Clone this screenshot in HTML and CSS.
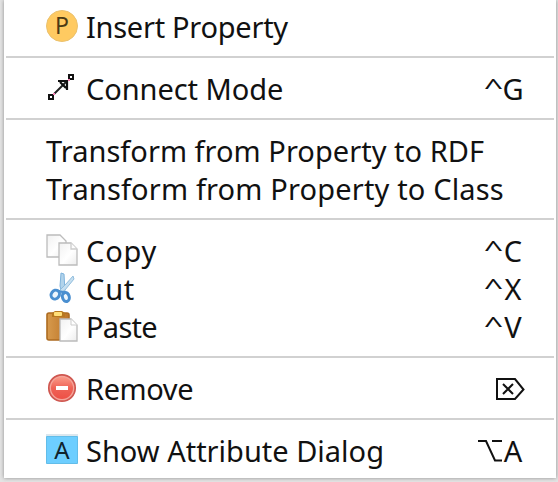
FILE: index.html
```html
<!DOCTYPE html>
<html lang="en">
<head>
<meta charset="utf-8">
<title>Context Menu</title>
<link rel="stylesheet" href="styles.css">
</head>
<body>
<div class="menu">
  <div class="item">
    <svg class="icon" viewBox="0 0 32 32"><circle cx="16" cy="16" r="15.5" fill="#ffca61" stroke="#eac16e"/><text x="16" y="24" text-anchor="middle" class="p-letter">P</text></svg>
    <span class="label insert">Insert Property</span>
  </div>
  <hr>
  <div class="item">
    <svg class="icon" viewBox="0 0 32 32"><g fill="none" stroke="#111" stroke-width="2"><path d="M8 22L21 9" stroke="#222"/><path d="M12 9h9v9M14 10l6 6" stroke-width="2.2"/><rect x="3" y="23" width="4" height="4"/><rect x="23" y="3" width="4" height="4"/></g><path d="M7 21h2v2H7zM22 7h2v2h-2z" fill="#f580b4"/></svg>
    <span class="label connect">Connect Mode</span>
    <span class="keys"><span class="caret">^</span><span class="key">G</span></span>
  </div>
  <hr>
  <div class="item"><span class="label rdf">Transform from Property to RDF</span></div>
  <div class="item"><span class="label class">Transform from Property to Class</span></div>
  <hr>
  <div class="item">
    <svg class="icon" viewBox="0 0 32 32"><defs><linearGradient id="paper" x1="0" y1="0" x2="1" y2="1"><stop offset="0" stop-color="#f1f1f1"/><stop offset=".55" stop-color="#fff"/><stop offset="1" stop-color="#ececec"/></linearGradient></defs><g fill="url(#paper)" stroke="#bcbcbc" stroke-width="1.3"><path d="M1 1h13l6 6v16H1z"/><path d="M13 9h12l6 6v16H13z"/><path d="M25 9v6h6" stroke="#ccc"/></g></svg>
    <span class="label copy">Copy</span>
    <span class="keys"><span class="caret">^</span><span class="key">C</span></span>
  </div>
  <div class="item">
    <svg class="icon" viewBox="0 0 32 32"><path d="M15 1l3 1 1 18-3 2-2-8z" fill="#b1d3eb" stroke="#7fb3dc"/><path d="M27 4l1 3-9 11-5 3-1-2 7-7z" fill="#c6dff0" stroke="#91bddd"/><g fill="#edf6fd" stroke="#4a8fd0" stroke-width="3"><ellipse cx="9" cy="22.5" rx="4" ry="4.6" transform="rotate(35 9 23)"/><ellipse cx="20" cy="25" rx="3.4" ry="4.6" transform="rotate(-15 20 25.5)"/></g><path d="M12 19l5 1 2 2" fill="none" stroke="#4a8fd0" stroke-width="2"/></svg>
    <span class="label cut">Cut</span>
    <span class="keys"><span class="caret">^</span><span class="key">X</span></span>
  </div>
  <div class="item">
    <svg class="icon" viewBox="0 0 32 32"><defs><linearGradient id="board"><stop offset="0" stop-color="#d79a4d"/><stop offset="1" stop-color="#bc7426"/></linearGradient></defs><rect x="1" y="3" width="22" height="27" rx="2" fill="url(#board)" stroke="#ad6b20" stroke-width="1.6"/><path d="M6 3l3-2h7l3 2v4H6z" fill="#b8781f"/><rect x="8" y="2" width="8" height="4" rx="1" fill="#ffdf79"/><path d="M14 9h11l6 6v16H14z" fill="url(#paper)" stroke="#bbb" stroke-width="1.3"/><path d="M25 9v6h6" fill="#fff" stroke="#ccc"/></svg>
    <span class="label paste">Paste</span>
    <span class="keys"><span class="caret">^</span><span class="key">V</span></span>
  </div>
  <hr>
  <div class="item">
    <svg class="icon" viewBox="0 0 32 32"><defs><linearGradient id="red" x1="0" y1="0" x2="0" y2="1"><stop offset="0" stop-color="#fa9a88"/><stop offset=".5" stop-color="#ef6457"/><stop offset="1" stop-color="#ee5046"/></linearGradient></defs><circle cx="16" cy="16" r="13.2" fill="#f5a59a" stroke="#cf5750" stroke-width="1.7"/><circle cx="16" cy="16" r="11" fill="url(#red)"/><rect x="10" y="14" width="12" height="4" fill="#fff"/></svg>
    <span class="label remove">Remove</span>
    <svg class="symbol" viewBox="0 0 48 38" fill="none" stroke="#111" stroke-width="2"><path d="M20 9h18l8.5 10.5L38 29H20z"/><path d="M26 14l10 10M36 14l-10 10"/></svg>
  </div>
  <hr>
  <div class="item">
    <svg class="icon" viewBox="0 0 32 32"><path fill="#dbe7ee" d="M0 0h32v3H0z"/><path fill="#6dceff" stroke="#62bde9" d="M.5 2.5h31v27H.5z"/><text x="16" y="25" text-anchor="middle" class="a-letter">A</text></svg>
    <span class="label show">Show Attribute Dialog</span>
    <span class="keys"><svg class="option" viewBox="0 0 24 38" fill="none" stroke="#111" stroke-width="2"><path d="M0 9h8l9 19.5h7M14 9h10"/></svg><span class="key">A</span></span>
  </div>
</div>
</body>
</html>
```
FILE: styles.css
```css
html { background: #e4e4e4; }
body { margin: 0; height: 482px; overflow: hidden; font-family: "Noto Sans", sans-serif; color: #111; }
.menu {
  box-sizing: border-box;
  width: 552px;
  height: 478px;
  margin: 0 2px 4px 4px;
  padding: 8px 0;
  background: #fff;
  box-shadow: 0 0 4px #8c8c8c;
}
hr { height: 2px; margin: 10px 2px 12px; border: 0; background: #d1d1d1; }
.item {
  display: flex;
  align-items: center;
  height: 38px;
  padding: 0 33px 0 42px;
  font-size: 29px;
  line-height: 38px;
  white-space: nowrap;
}
.icon { flex: none; width: 32px; height: 32px; margin: 0 8px 2px 0; }
.insert { letter-spacing: -.27px; }
.connect { letter-spacing: -.07px; }
.rdf { letter-spacing: .03px; }
.class { letter-spacing: .16px; }
.copy { letter-spacing: .8px; }
.cut { letter-spacing: .8px; }
.paste { letter-spacing: -.7px; }
.remove { letter-spacing: -.4px; }
.p-letter { font: 23px "Noto Sans", sans-serif; fill: #4c3a14; }
.a-letter { font: 24px "Noto Sans", sans-serif; fill: #10232e; }
.keys { display: flex; margin-left: auto; }
.key { display: flex; justify-content: center; width: 20px; }
.caret { width: 17px; margin-right: 1px; text-align: center; transform: translateY(-3px) scale(1.18, .78); }
.symbol { width: 48px; height: 38px; margin: 0 -2px 0 auto; }
.option { width: 24px; height: 38px; margin-right: 1px; }
```
